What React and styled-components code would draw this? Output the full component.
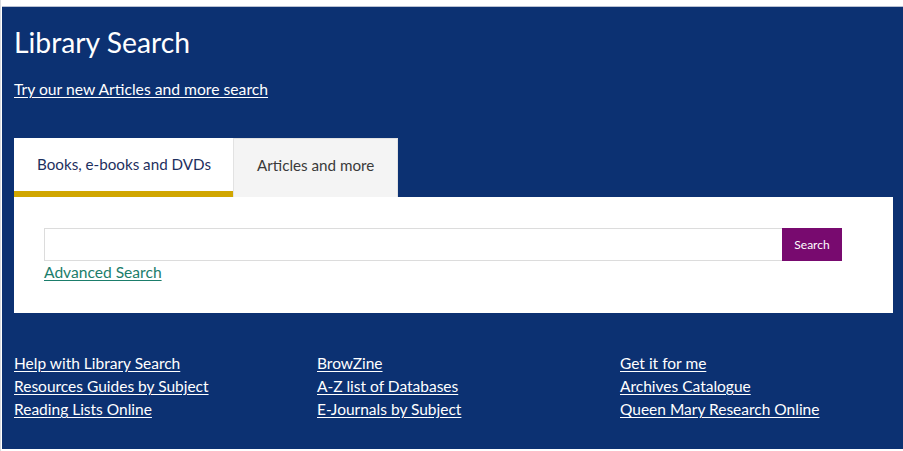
import React from 'react';
import styled, { createGlobalStyle, css } from 'styled-components';

const GlobalStyle = createGlobalStyle`
    html, body {
        margin: 0;
        padding: 0;
        background: #fff;
    }
    body {
        font-family: Lato, "Liberation Sans", sans-serif;
    }
`;

const StyledFrame = styled.div`
    width: 903px;
    height: 451px;
    box-sizing: border-box;
    padding: 6px 0 2px 1px;
    border-left: 1px solid #d9dbe0;
    background: #fff;
`;
const StyledPanel = styled.div`
    box-sizing: border-box;
    height: 100%;
    background: #0c3172;
    border-top: 1px solid #b9c1d3;
    padding: 18px 10px 0 12px;
    color: #fff;
`;
const StyledTitle = styled.h1`
    margin: 0;
    font-size: 28.3px;
    line-height: 34px;
    font-weight: 400;
`;
const StyledTopLink = styled.a`
    display: inline-block;
    margin-top: 19px;
    font-size: 15.7px;
    line-height: 22px;
    color: #fff;
    text-decoration: underline;
    text-underline-offset: 2px;
`;
const StyledTabs = styled.div`
    display: flex;
    margin-top: 38px;
`;
const StyledTab = styled.div`
    box-sizing: border-box;
    height: 59px;
    padding: 0 22px 1px 23px;
    display: flex;
    align-items: center;
    font-size: 15.2px;
    background: #fff;
    color: #1d2f5e;
    border-bottom: 6px solid #d1a600;
    ${props => !props.active && css`
        background: #f4f4f4;
        color: #3a3a3a;
        border: 1px solid #e2e2e2;
        border-bottom: none;
        padding: 0 23px 7px 23px;
    `}
`;
const StyledBox = styled.div`
    background: #fff;
    height: 116px;
    box-sizing: border-box;
    padding: 31px 51px 0 30px;
`;
const StyledSearchRow = styled.div`
    display: flex;
    height: 33px;
`;
const StyledInput = styled.input`
    flex: 1;
    box-sizing: border-box;
    height: 33px;
    border: 1px solid #dcdcdc;
    border-right: none;
    margin: 0;
    padding: 0 8px;
    font: inherit;
    outline: none;
`;
const StyledButton = styled.button`
    width: 60px;
    height: 33px;
    margin: 0;
    border: none;
    background: #780a6f;
    color: #fff;
    font-family: Lato, sans-serif;
    font-size: 12px;
    cursor: pointer;
`;
const StyledAdvanced = styled.a`
    display: inline-block;
    font-size: 15.6px;
    line-height: 22px;
    color: #1b7d6b;
    text-decoration: underline;
    text-underline-offset: 2px;
`;
const StyledFooter = styled.div`
    display: grid;
    grid-template-columns: 303px 303px 1fr;
    margin-top: 39px;
`;
const StyledColumn = styled.div`
    display: flex;
    flex-direction: column;
    align-items: flex-start;
`;
const StyledFooterLink = styled.a`
    font-size: 15.5px;
    line-height: 23px;
    color: #fff;
    text-decoration: underline;
    text-underline-offset: 2px;
`;

const columns = [
    ['Help with Library Search', 'Resources Guides by Subject', 'Reading Lists Online'],
    ['BrowZine', 'A-Z list of Databases', 'E-Journals by Subject'],
    ['Get it for me', 'Archives Catalogue', 'Queen Mary Research Online'],
];

export default function App() {
    return (
        <>
            <GlobalStyle />
            <StyledFrame>
                <StyledPanel>
                    <StyledTitle>Library Search</StyledTitle>
                    <StyledTopLink href='#'>Try our new Articles and more search</StyledTopLink>
                    <StyledTabs>
                        <StyledTab active>Books, e-books and DVDs</StyledTab>
                        <StyledTab>Articles and more</StyledTab>
                    </StyledTabs>
                    <StyledBox>
                        <StyledSearchRow>
                            <StyledInput type='text' aria-label='Search' />
                            <StyledButton>Search</StyledButton>
                        </StyledSearchRow>
                        <StyledAdvanced href='#'>Advanced Search</StyledAdvanced>
                    </StyledBox>
                    <StyledFooter>
                        {columns.map((col, i) => (
                            <StyledColumn key={i}>
                                {col.map(label => (
                                    <StyledFooterLink key={label} href='#'>{label}</StyledFooterLink>
                                ))}
                            </StyledColumn>
                        ))}
                    </StyledFooter>
                </StyledPanel>
            </StyledFrame>
        </>
    );
}
